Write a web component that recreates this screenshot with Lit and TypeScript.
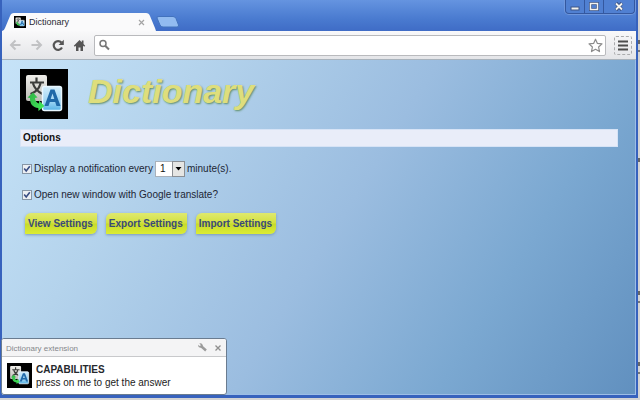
import { LitElement, html, css, svg } from "lit";
import { customElement } from "lit/decorators.js";

@customElement("translate-logo")
class TranslateLogo extends LitElement {
  static styles = css`
    :host { display: block; background: #000; }
    .art { display: block; width: 100%; height: 100%; }
  `;
  render() {
    return html`<svg class="art" viewBox="0 0 48 50" preserveAspectRatio="none" aria-hidden="true">
      <defs>
        <linearGradient id="paper" x1="0" y1="0" x2="0" y2="1"><stop offset="0" stop-color="#efeeea" /><stop offset="1" stop-color="#bdbcb6" /></linearGradient>
        <linearGradient id="blue" x1="0" y1="0" x2="0" y2="1"><stop offset="0" stop-color="#d3edfb" /><stop offset=".65" stop-color="#9bd3f3" /><stop offset="1" stop-color="#55b2e6" /></linearGradient>
        <linearGradient id="green" x1="0" y1="0" x2="1" y2="1"><stop offset="0" stop-color="#2fae45" /><stop offset="1" stop-color="#43ef5c" /></linearGradient>
      </defs>
      <rect x="6" y="6" width="21" height="26" rx="2" fill="url(#paper)" />
      <path d="M16.500 8.500v4M10 13.500h14M20.500 14.500C19 20 15 23.500 10.500 25M13 14.500c1.500 5 4.500 8 9.500 10.500" fill="none" stroke="#3b3c3a" stroke-width="2.200" />
      <rect x="22.500" y="17.500" width="19" height="24" rx="2" fill="url(#blue)" stroke="#e9f7ff" stroke-width="1.500" />
      <path d="M24.500 37 30.500 20.500h4L40.500 37h-4l-1.300-4h-5.400l-1.300 4zM30.700 30h3.600l-1.800-5.600z" fill="#2069a8" fill-rule="evenodd" />
      <path d="M7.500 28.500 13 23.500l4.500 5-2.500.5c.2 3 1.500 4.800 4 5.500v-3l5.500 5.500-6 5-.2-3C12.500 38.500 9.800 34.500 10 29z" fill="url(#green)" />
    </svg>`;
  }
}

@customElement("title-strip")
class TitleStrip extends LitElement {
  static styles = css`
    :host {
      display: flex; align-items: flex-end; height: 31px; box-sizing: border-box; padding-right: 1px;
      background: linear-gradient(#6594e0, #4a7bd0 60%, #3f6cc6);
      font: 9px/12px "Liberation Sans", Arial, sans-serif; color: #2a2a35;
    }
    .tab { position: relative; display: flex; align-items: center; gap: 3px; width: 154px; height: 18px; box-sizing: border-box; padding: 0 11px 0 12px; }
    .shape { position: absolute; inset: 0; width: 100%; height: 100%; }
    .icon { position: relative; width: 12px; height: 12px; }
    .name { position: relative; flex: 1; }
    .plain { position: relative; display: flex; border: 0; padding: 0; background: none; }
    .new { margin-bottom: 3px; }
    .space { flex: 1; }
    .controls { display: flex; align-self: flex-start; height: 13px; border: 1px solid #34589f; border-top: 0; border-radius: 0 0 4px 4px; box-shadow: 0 0 0 1px #6f97dc; overflow: hidden; background: #5080d2; }
    .control { display: flex; align-items: center; justify-content: center; width: 19px; border: 0; border-right: 1px solid #34589f; padding: 0; background: none; }
    .control:last-child { width: 30px; border-right: 0; }
  `;
  render() {
    return html`
      <div class="tab">
        <svg class="shape" viewBox="0 0 154 18" preserveAspectRatio="none" aria-hidden="true"><path d="M0 18Q2 18 3 15L8 3Q9 0 12 0H144Q147 0 148 3L153 15Q154 18 154 18Z" fill="#fafafb" /></svg>
        <translate-logo class="icon"></translate-logo>
        <span class="name">Dictionary</span>
        <button class="plain" aria-label="Close tab"><svg width="7" height="7" viewBox="0 0 7 7"><path d="M1 1l5 5M6 1L1 6" stroke="#a4a4a4" stroke-width="1.200" /></svg></button>
      </div>
      <button class="plain new" aria-label="New tab"><svg width="24" height="12" viewBox="0 0 24 12"><path d="M3 .5H17Q19 .5 20 2.500L22.500 9Q23 11 21 11H7Q5 11 4 9L1 2Q.5 .5 3 .5Z" fill="#92bbf0" stroke="#4272bd" /></svg></button>
      <span class="space"></span>
      <div class="controls">
        <button class="control" aria-label="Minimize"><svg width="10" height="9" viewBox="0 0 10 9"><rect x="1" y="5" width="8" height="3" fill="#f3f3ef" stroke="#3d5486" /></svg></button>
        <button class="control" aria-label="Maximize"><svg width="10" height="9" viewBox="0 0 10 9"><rect x="1.500" y="1.500" width="7" height="6" fill="none" stroke="#3d5486" stroke-width="3" /><rect x="1.500" y="1.500" width="7" height="6" fill="none" stroke="#f3f3ef" stroke-width="1.500" /></svg></button>
        <button class="control" aria-label="Close"><svg width="10" height="9" viewBox="0 0 10 9"><path d="M2 1l6 7M8 1L2 8" stroke="#3d5486" stroke-width="3.500" /><path d="M2 1.500l6 6M8 1.500L2 7.500" stroke="#f3f3ef" stroke-width="1.800" /></svg></button>
      </div>`;
  }
}

@customElement("nav-bar")
class NavBar extends LitElement {
  static styles = css`
    :host { display: flex; align-items: center; gap: 8px; height: 29px; box-sizing: border-box; padding: 0 4px 0 7px; border-bottom: 1px solid #a9b3bc; background: linear-gradient(#f9f9fa, #e4e5e8); }
    .nav { display: flex; border: 0; padding: 0; background: none; }
    .address { display: flex; flex: 1; align-items: center; gap: 4px; height: 21px; box-sizing: border-box; padding: 0 2px 0 4px; border: 1px solid #b9babd; border-radius: 2px; background: #fff; }
    .query { flex: 1; min-width: 0; border: 0; padding: 0; outline: 0; background: none; font: 10px "Liberation Sans", Arial, sans-serif; }
    .menu { align-items: center; justify-content: center; width: 18px; height: 19px; box-sizing: border-box; border: 1px dashed #aaabad; border-radius: 2px; }
  `;
  render() {
    const arrow = svg`<path d="M11.500 6H2.500M6.500 1.500L2 6l4.500 4.500" fill="none" stroke="#c1c2c4" stroke-width="2" />`;
    return html`
      <button class="nav" aria-label="Back"><svg width="13" height="12" viewBox="0 0 13 12">${arrow}</svg></button>
      <button class="nav" aria-label="Forward"><svg width="13" height="12" viewBox="0 0 13 12"><g transform="matrix(-1 0 0 1 13 0)">${arrow}</g></svg></button>
      <button class="nav" aria-label="Reload"><svg width="14" height="13" viewBox="0 0 14 13"><path d="M10.400 3.500A4.400 4.400 0 1 0 11 8.500" fill="none" stroke="#555" stroke-width="2.200" /><path d="M12.800 .8V6H7.600z" fill="#555" /></svg></button>
      <button class="nav" aria-label="Home"><svg width="13" height="13" viewBox="0 0 13 13"><path d="M6.500 1 0.800 6.800l1 .9L3 6.700V12h2.500V8.500h2V12H10V6.700l1.200 1 1-.9L10.500 5V1.500H8.800v1.800z" fill="#555" /></svg></button>
      <div class="address">
        <svg width="11" height="12" viewBox="0 0 11 12" aria-hidden="true"><circle cx="4" cy="4.500" r="3" fill="none" stroke="#777" stroke-width="1.500" /><path d="M6.200 6.800 10 10.500" stroke="#777" stroke-width="2" /></svg>
        <input class="query" type="text" aria-label="Address and search" />
        <button class="nav" aria-label="Bookmark"><svg width="15" height="15" viewBox="0 0 15 15"><path d="M7.500 1.200 9.400 5.400l4.600.5-3.400 3.100.9 4.600-4-2.300-4 2.300.9-4.600L1 5.900l4.600-.5z" fill="#fff" stroke="#8c8c8c" stroke-width="1.200" stroke-linejoin="round" /></svg></button>
      </div>
      <button class="nav menu" aria-label="Menu"><svg width="10" height="11" viewBox="0 0 10 11"><path d="M0 1.500h10M0 5.500h10M0 9.500h10" stroke="#4d4d4d" stroke-width="2" /></svg></button>`;
  }
}

@customElement("options-form")
class OptionsForm extends LitElement {
  static styles = css`
    :host { display: block; flex: 1; padding: 8px 18px; color: #1c2635; font: 10px/14px "Liberation Sans", Arial, sans-serif; background: linear-gradient(122deg, #c6e3f8, #b4d3ec 24%, #9bbde0 52%, #7ba8d1 76%, #6190bf); box-shadow: inset -1px -1px #9dbde6; }
    .brand { display: flex; align-items: flex-start; gap: 20px; }
    .logo { width: 48px; height: 50px; margin-top: 1px; }
    .name { margin: 4px 0 0; font: italic bold 34px/38px "Liberation Sans", Arial, sans-serif; color: #dede7c; text-shadow: 1px 1px 2px #5f8f68; }
    .heading { margin: 10px 0 0; padding: 1px 2px; border: 1px solid #d6e3f6; background: #e9edf9; font-size: 10px; line-height: 14px; font-weight: bold; color: #111; }
    .row { display: flex; align-items: center; gap: 2px; height: 16px; margin: 14px 0 0 2px; }
    .row + .row { margin-top: 10px; }
    .tick { appearance: none; width: 10px; height: 10px; margin: 0; box-sizing: border-box; border: 1px solid #8796a6; background: #eceff3; }
    .box { position: relative; display: flex; }
    .mark { position: absolute; inset: 0; pointer-events: none; display: none; }
    .tick:checked + .mark { display: block; }
    .pick { position: relative; display: flex; }
    .minutes { appearance: none; width: 30px; height: 16px; box-sizing: border-box; border: 1px solid #a9b1ba; border-radius: 0; padding: 0 0 0 4px; background: #fff; color: #111; font: 10px/14px "Liberation Sans", Arial, sans-serif; }
    .arrow { position: absolute; right: 0; top: 0; pointer-events: none; }
    .actions { display: flex; gap: 9px; margin: 10px 0 0 5px; }
    .action { height: 21px; border: 0; border-radius: 6px 0 6px 0; padding: 0 4px 0 3px; background: linear-gradient(#dfe96f, #d3e13f 48%, #c6da2b 52%, #dcec34); box-shadow: 0 1px 3px #7b99b6; color: #3a4a78; font: bold 10px/20px "Liberation Sans", Arial, sans-serif; }
  `;
  private tick(id: string) {
    return html`<span class="box"><input class="tick" type="checkbox" id=${id} checked /><svg class="mark" width="10" height="10" viewBox="0 0 10 10" aria-hidden="true"><path d="M2.200 4.500 4.200 7 7.800 2.200" fill="none" stroke="#394d83" stroke-width="1.600" /></svg></span>`;
  }
  render() {
    return html`
      <header class="brand"><translate-logo class="logo"></translate-logo><h1 class="name">Dictionary</h1></header>
      <h2 class="heading">Options</h2>
      <div class="row">
        ${this.tick("notify")}<label for="notify">Display a notification every</label>
        <span class="pick"><select class="minutes" aria-label="Minutes"><option>1</option><option>5</option><option>10</option></select><svg class="arrow" width="13" height="16" viewBox="0 0 13 16" aria-hidden="true"><rect x=".5" y=".5" width="12" height="15" fill="#e5e5e3" stroke="#8b8f94" /><path d="M3.500 6h6L6.500 9.500z" fill="#000" /></svg></span>
        <span>minute(s).</span>
      </div>
      <div class="row">${this.tick("open")}<label for="open">Open new window with Google translate?</label></div>
      <div class="actions">
        ${["View", "Export", "Import"].map((v) => html`<button class="action">${v} Settings</button>`)}
      </div>`;
  }
}

@customElement("toast-card")
class ToastCard extends LitElement {
  static styles = css`
    :host { display: block; width: 226px; box-sizing: border-box; border: 1px solid #6a7c90; border-radius: 3px; overflow: hidden; background: #fff; font: 10px/13px "Liberation Sans", Arial, sans-serif; color: #222; }
    .top { display: flex; align-items: center; gap: 7px; height: 18px; box-sizing: border-box; padding: 0 4px; border-bottom: 1px solid #c8c9cb; background: #f4f4f5; font-size: 8px; line-height: 12px; color: #85878b; }
    .source { flex: 1; padding-top: 2px; }
    .plain { display: flex; border: 0; padding: 0; background: none; }
    .body { display: flex; align-items: center; gap: 4px; height: 37px; padding-left: 5px; }
    .logo { width: 25px; height: 25px; }
    .title { font-weight: bold; color: #26292e; }
    .text { margin: 0; }
  `;
  render() {
    return html`
      <div class="top">
        <span class="source">Dictionary extension</span>
        <button class="plain" aria-label="Notification settings"><svg width="10" height="9" viewBox="0 0 10 9"><path d="M4.500 3.500 9 7.500" stroke="#9b9b9b" stroke-width="2.400" /><path d="M1 1.800 3 3.200 3.800 2 2.300.4Q5.200-.3 5.900 2.600 5.700 5 3.200 4.800 1 4.400 1 1.800z" fill="#9b9b9b" /></svg></button>
        <button class="plain" aria-label="Dismiss"><svg width="8" height="8" viewBox="0 0 8 8"><path d="M1.500 1.500l5 5M6.500 1.500l-5 5" stroke="#8f8f8f" stroke-width="1.300" /></svg></button>
      </div>
      <div class="body">
        <translate-logo class="logo"></translate-logo>
        <div><p class="text title">CAPABILITIES</p><p class="text">press on me to get the answer</p></div>
      </div>`;
  }
}

@customElement("app-root")
class AppRoot extends LitElement {
  static styles = css`
    :host {
      position: relative; display: flex; min-height: 100vh; box-sizing: border-box; padding: 0 2px 2px 0;
      background: linear-gradient(#d3d3d3 40px, #666 40px 44px, #d3d3d3 44px 50px, #777 50px 52px, #d3d3d3 52px 158px, #666 158px 162px, #d3d3d3 162px 291px, #666 291px 295px, #d3d3d3 295px 301px, #777 301px 303px, #d3d3d3 303px 362px, #666 362px 366px, #d3d3d3 366px 372px, #777 372px 374px, #d3d3d3 374px);
    }
    .window { display: flex; flex: 1; flex-direction: column; min-width: 0; border: solid #3762bd; border-width: 0 2px 3px; }
    .toast { position: absolute; left: 1px; bottom: 5px; }
  `;
  render() {
    return html`
      <main class="window"><title-strip></title-strip><nav-bar></nav-bar><options-form></options-form></main>
      <toast-card class="toast"></toast-card>`;
  }
}
